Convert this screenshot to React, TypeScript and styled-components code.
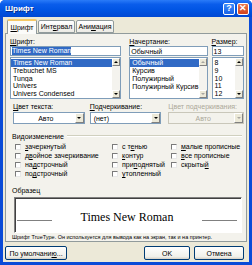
import React from 'react';
import styled, { createGlobalStyle } from 'styled-components';

const Global = createGlobalStyle`
  html, body { margin: 0; padding: 0; background: #fff; }
  body { width: 252px; height: 265px; overflow: hidden; font-family: "Liberation Sans", Arial, sans-serif; font-size: 7px; color: #000; }
  * { box-sizing: border-box; }
`;

const Window = styled.div`
  width: 252px;
  height: 265px;
  background: #0A4BD8;
  display: flex;
  flex-direction: column;
  padding: 0 3px 3px 3px;
  border-radius: 5px 5px 0 0;
`;

const TitleBar = styled.div`
  height: 17px;
  margin: 0 -3px;
  display: flex;
  align-items: center;
  justify-content: space-between;
  padding: 0 3px 0 5px;
  border-radius: 5px 5px 0 0;
  background: linear-gradient(#2A7BF8 0%, #0A5DEB 25%, #0054E3 60%, #0048D3 100%);
`;

const Title = styled.span`
  color: #fff;
  font: bold 8px "Liberation Sans", Arial, sans-serif;
  text-shadow: 1px 1px 0 #0A2E8A;
`;

const TitleButtons = styled.div`
  display: flex;
  gap: 2px;
`;

const TitleButton = styled.div<{ $close?: boolean }>`
  width: 12px;
  height: 12px;
  border: 1px solid #fff;
  border-radius: 2px;
  background: ${p => (p.$close ? 'linear-gradient(#E9784E, #D2421C)' : 'linear-gradient(#3C8CFB, #1B62E6)')};
  color: #fff;
  font: bold 9px "Liberation Sans", Arial, sans-serif;
  display: flex;
  align-items: center;
  justify-content: center;
  line-height: 1;
`;

const Body = styled.div`
  flex: 1;
  background: #ECE9D8;
  display: flex;
  flex-direction: column;
  padding: 2px 2px 2px 2px;
`;

const Tabs = styled.div`
  display: flex;
  align-items: flex-end;
  height: 14px;
  padding-left: 2px;
  gap: 1px;
  position: relative;
  z-index: 1;
`;

const Tab = styled.div<{ $active?: boolean; $w: number }>`
  width: ${p => p.$w}px;
  height: ${p => (p.$active ? 15 : 13)}px;
  margin-bottom: ${p => (p.$active ? -1 : 0)}px;
  border: 1px solid #919B9C;
  border-bottom: ${p => (p.$active ? 'none' : '1px solid #919B9C')};
  border-top: ${p => (p.$active ? '2px solid #F5C865' : '1px solid #919B9C')};
  border-radius: 2px 2px 0 0;
  background: ${p => (p.$active ? '#FBFBF9' : 'linear-gradient(#FFFFFF, #ECEBE5)')};
  display: flex;
  align-items: center;
  justify-content: center;
  font-size: 7px;
`;

const U = styled.span`
  text-decoration: underline;
`;

const Panel = styled.div`
  flex: 1;
  border: 1px solid #919B9C;
  background: #F3F2EC;
  display: flex;
  flex-direction: column;
  padding: 4px 2px 0 4px;
`;

const FontRow = styled.div`
  display: flex;
  gap: 4px;
`;

const Field = styled.div<{ $w: number; $mr?: number }>`
  width: ${p => p.$w}px;
  margin-right: ${p => p.$mr ?? 0}px;
  display: flex;
  flex-direction: column;
`;

const Label = styled.div<{ $disabled?: boolean }>`
  height: 8px;
  line-height: 8px;
  white-space: nowrap;
  color: ${p => (p.$disabled ? '#ACA899' : '#000')};
`;

const Input = styled.div`
  height: 10px;
  border: 1px solid #7F9DB9;
  background: #fff;
  display: flex;
  align-items: center;
  padding-left: 1px;
`;

const Sel = styled.span`
  background: #316AC5;
  color: #fff;
  line-height: 8px;
`;

const List = styled.div`
  height: 42px;
  margin-top: 1px;
  border: 1px solid #7F9DB9;
  background: #fff;
  display: flex;
`;

const Items = styled.div`
  flex: 1;
  display: flex;
  flex-direction: column;
  padding-top: 1px;
`;

const Item = styled.div<{ $sel?: boolean }>`
  height: 8px;
  line-height: 8px;
  padding-left: 2px;
  white-space: nowrap;
  overflow: hidden;
  background: ${p => (p.$sel ? '#316AC5' : 'transparent')};
  color: ${p => (p.$sel ? '#fff' : '#000')};
`;

const Scroll = styled.div`
  width: 8px;
  display: flex;
  flex-direction: column;
  background: #F4F3EE;
`;

const ScrollBtn = styled.div`
  height: 8px;
  background: #ECE9D8;
  border: 1px solid;
  border-color: #fff #808080 #808080 #fff;
  display: flex;
  align-items: center;
  justify-content: center;
`;

const Arrow = styled.div<{ $down?: boolean; $disabled?: boolean }>`
  width: 0;
  height: 0;
  border-left: 2px solid transparent;
  border-right: 2px solid transparent;
  ${p => (p.$down ? 'border-top' : 'border-bottom')}: 2px solid ${p => (p.$disabled ? '#A7A6A0' : '#000')};
`;

const Track = styled.div`
  flex: 1;
`;

const ComboRow = styled.div`
  display: flex;
  margin-top: 4px;
`;

const ComboField = styled.div<{ $w: number; $ml: number }>`
  width: ${p => p.$w}px;
  margin-left: ${p => p.$ml}px;
  display: flex;
  flex-direction: column;
`;

const Combo = styled.div<{ $disabled?: boolean }>`
  height: 12px;
  margin-top: 1px;
  border: 1px solid ${p => (p.$disabled ? '#C9C7BA' : '#7F9DB9')};
  background: ${p => (p.$disabled ? '#F3F2EC' : '#fff')};
  color: ${p => (p.$disabled ? '#ACA899' : '#000')};
  display: flex;
  align-items: stretch;
`;

const ComboText = styled.div<{ $center?: boolean }>`
  flex: 1;
  display: flex;
  align-items: center;
  justify-content: ${p => (p.$center ? 'center' : 'flex-start')};
  padding-left: 3px;
`;

const ComboBtn = styled.div`
  width: 9px;
  background: #ECE9D8;
  border: 1px solid;
  border-color: #fff #808080 #808080 #fff;
  display: flex;
  align-items: center;
  justify-content: center;
`;

const GroupHead = styled.div`
  display: flex;
  align-items: center;
  gap: 3px;
  margin-top: 8px;
  height: 8px;
  padding-left: 2px;
  padding-right: 2px;
`;

const GroupLine = styled.div`
  flex: 1;
  height: 0;
  border-top: 1px solid #D0D0BF;
  border-bottom: 1px solid #fff;
`;

const Checks = styled.div`
  display: grid;
  grid-template-columns: 97px 59px 1fr;
  grid-auto-flow: column;
  grid-template-rows: repeat(4, 9px);
  margin-top: 2px;
  padding-left: 5px;
`;

const Check = styled.div`
  display: flex;
  align-items: center;
  gap: 4px;
  white-space: nowrap;
`;

const Box = styled.div`
  width: 6px;
  height: 6px;
  background: #fff;
  border: 1px solid;
  border-color: #7A7A7A #E8E8E8 #E8E8E8 #7A7A7A;
`;

const SampleLabel = styled.div`
  margin-top: 9px;
  height: 8px;
  line-height: 8px;
  padding-left: 2px;
`;

const SampleBox = styled.div`
  margin: 2px 2px 0 4px;
  height: 36px;
  background: #fff;
  border: 1px solid;
  border-color: #808080 #fff #fff #808080;
  box-shadow: inset 1px 1px 0 #404040;
  display: flex;
  align-items: center;
  justify-content: space-between;
  padding: 4px 4px 0 2px;
`;

const Baseline = styled.div`
  width: 35px;
  height: 0;
  border-top: 1px solid #808080;
  margin-top: 7px;
`;

const SampleText = styled.div`
  font: 12px "Liberation Serif", "Times New Roman", serif;
`;

const Note = styled.div`
  font-size: 5.5px;
  margin-top: 1px;
  padding-left: 2px;
  white-space: nowrap;
  height: 7px;
  line-height: 7px;
`;

const ButtonRow = styled.div`
  display: flex;
  margin-top: 4px;
  padding: 0 1px 0 0;
`;

const Button = styled.div<{ $w: number; $ml?: number }>`
  width: ${p => p.$w}px;
  margin-left: ${p => p.$ml ?? 0}px;
  height: 14px;
  border: 1px solid #003C74;
  border-radius: 2px;
  background: linear-gradient(#FFFFFF, #F0F0EA 80%, #D6D0C5);
  display: flex;
  align-items: center;
  justify-content: center;
  white-space: nowrap;
`;

const fonts = ['Times New Roman', 'Trebuchet MS', 'Tunga', 'Univers', 'Univers Condensed'];
const styles = ['Обычный', 'Курсив', 'Полужирный', 'Полужирный Курсив'];
const sizes = ['8', '9', '10', '11', '12'];

const ScrollBar = ({ disabled }: { disabled?: boolean }) => (
  <Scroll>
    <ScrollBtn><Arrow $disabled={disabled} /></ScrollBtn>
    <Track />
    <ScrollBtn><Arrow $down $disabled={disabled} /></ScrollBtn>
  </Scroll>
);

export default function App() {
  return (
    <>
      <Global />
      <Window>
        <TitleBar>
          <Title>Шрифт</Title>
          <TitleButtons>
            <TitleButton>?</TitleButton>
            <TitleButton $close>✕</TitleButton>
          </TitleButtons>
        </TitleBar>
        <Body>
          <Tabs>
            <Tab $active $w={30}><U>Ш</U>рифт</Tab>
            <Tab $w={37}>Инт<U>е</U>рвал</Tab>
            <Tab $w={38}>Ани<U>м</U>ация</Tab>
          </Tabs>
          <Panel>
            <FontRow>
              <Field $w={113} $mr={4}>
                <Label><U>Ш</U>рифт:</Label>
                <Input><Sel>Times New Roman</Sel></Input>
                <List>
                  <Items>
                    {fonts.map((f, i) => <Item key={f} $sel={i === 0}>{f}</Item>)}
                  </Items>
                  <ScrollBar />
                </List>
              </Field>
              <Field $w={79}>
                <Label><U>Н</U>ачертание:</Label>
                <Input>Обычный</Input>
                <List>
                  <Items>
                    {styles.map((s, i) => <Item key={s} $sel={i === 0}>{s}</Item>)}
                  </Items>
                  <ScrollBar disabled />
                </List>
              </Field>
              <Field $w={33}>
                <Label><U>Р</U>азмер:</Label>
                <Input>13</Input>
                <List>
                  <Items>
                    {sizes.map(s => <Item key={s}>{s}</Item>)}
                  </Items>
                  <ScrollBar />
                </List>
              </Field>
            </FontRow>
            <ComboRow>
              <ComboField $w={72} $ml={3}>
                <Label><U>Ц</U>вет текста:</Label>
                <Combo>
                  <ComboText $center>Авто</ComboText>
                  <ComboBtn><Arrow $down /></ComboBtn>
                </Combo>
              </ComboField>
              <ComboField $w={72} $ml={5}>
                <Label><U>П</U>одчеркивание:</Label>
                <Combo>
                  <ComboText>(нет)</ComboText>
                  <ComboBtn><Arrow $down /></ComboBtn>
                </Combo>
              </ComboField>
              <ComboField $w={76} $ml={7}>
                <Label $disabled>Цвет подчеркивания:</Label>
                <Combo $disabled>
                  <ComboText $center>Авто</ComboText>
                  <ComboBtn><Arrow $down $disabled /></ComboBtn>
                </Combo>
              </ComboField>
            </ComboRow>
            <GroupHead>
              <span>Видоизменение</span>
              <GroupLine />
            </GroupHead>
            <Checks>
              <Check><Box /><span><U>з</U>ачеркнутый</span></Check>
              <Check><Box /><span>д<U>в</U>ойное зачеркивание</span></Check>
              <Check><Box /><span>на<U>д</U>строчный</span></Check>
              <Check><Box /><span>по<U>д</U>строчный</span></Check>
              <Check><Box /><span>с т<U>е</U>нью</span></Check>
              <Check><Box /><span><U>к</U>онтур</span></Check>
              <Check><Box /><span>при<U>п</U>однятый</span></Check>
              <Check><Box /><span><U>у</U>топленный</span></Check>
              <Check><Box /><span><U>м</U>алые прописные</span></Check>
              <Check><Box /><span><U>в</U>се прописные</span></Check>
              <Check><Box /><span>скрыты<U>й</U></span></Check>
            </Checks>
            <SampleLabel>Образец</SampleLabel>
            <SampleBox>
              <Baseline />
              <SampleText>Times New Roman</SampleText>
              <Baseline />
            </SampleBox>
            <Note>Шрифт TrueType. Он используется для вывода как на экран, так и на принтер.</Note>
          </Panel>
          <ButtonRow>
            <Button $w={62}>По умолчани<U>ю</U>...</Button>
            <Button $w={46} $ml={77}>OK</Button>
            <Button $w={50} $ml={4}>Отмена</Button>
          </ButtonRow>
        </Body>
      </Window>
    </>
  );
}
